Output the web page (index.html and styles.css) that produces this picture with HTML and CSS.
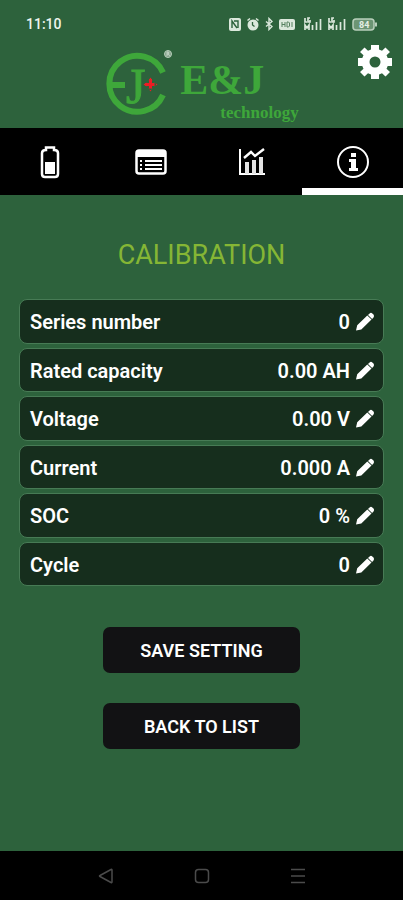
FILE: index.html
```
<!DOCTYPE html>
<html lang="en">
<head>
<meta charset="utf-8">
<meta name="viewport" content="width=device-width, initial-scale=1">
<title>Calibration</title>
<link rel="stylesheet" href="styles.css">
</head>
<body>
<svg class="defs" aria-hidden="true">
  <symbol id="pencil" viewBox="0 0 20 20"><path d="M1 18.500 2.200 13.300 12.300 3.500 16.500 7.500 6.300 17.500ZM13 2.900 14.600 1.400Q16 .300 17.300 1.400L18.500 2.600Q19.600 4 18.500 5.400L17.100 6.900Z"/></symbol>
</svg>
<div class="status">
  <time class="clock">11:10</time>
  <div class="indicators">
    <svg width="12" height="14" viewBox="0 0 12 14"><rect width="12" height="13" y="1" rx="2" fill="#dbe8dc"/><path d="M3 11V4l5 7M5 4h4v7" fill="none" stroke="#2d623c" stroke-width="1.400"/></svg>
    <svg width="12" height="14" viewBox="0 0 12 14"><circle cx="6" cy="8" r="4.500" fill="#dbe8dc" stroke="#dbe8dc" stroke-width="2"/><path d="M.5 3.500 3 1.500M11.500 3.500 9 1.500" fill="none" stroke="#dbe8dc" stroke-width="1.600"/><path d="M5.500 5v3l2 1.500" fill="none" stroke="#2d623c" stroke-width="1.300"/></svg>
    <svg width="8" height="14" viewBox="0 0 8 14"><path d="M1 4.500l6 5-3 3v-11l3 3-6 5" fill="none" stroke="#dbe8dc" stroke-width="1.400"/></svg>
    <svg class="wide" width="16" height="14" viewBox="0 0 16 14"><rect y="2" width="16" height="11" rx="2" fill="#dbe8dc"/><path d="M3 5v5M3 7.500h3M6 5v5M8 5v5h1.500l1-1V6l-1-1zM13 5v5" fill="none" stroke="#55805f"/></svg>
    <svg width="18" height="14" viewBox="0 0 18 14"><path d="M1 1v4h2M6 1H4v4h2V3M1 13V8l2 3 2-3v5M8.500 13V8M12.500 13V5M16.500 13V2" fill="none" stroke="#dbe8dc" stroke-width="1.700"/></svg>
    <svg width="18" height="14" viewBox="0 0 18 14"><path d="M1 1v4h2M6 1H4v4h2V3M1 13V8l2 3 2-3v5M8.500 13V8M12.500 13V5M16.500 13V2" fill="none" stroke="#dbe8dc" stroke-width="1.700"/></svg>
    <svg width="25" height="14" viewBox="0 0 25 14"><rect x="1" y="2" width="21" height="11" rx="3" fill="#6c9574" stroke="#b9cfbc" stroke-width="1.500"/><path d="M24 5.500v4" stroke="#b9cfbc" stroke-width="2"/><text class="charge" x="7" y="11">84</text></svg>
  </div>
</div>
<header class="header">
  <div class="logo">
    <svg class="emblem" width="70" height="70" viewBox="0 0 70 70" role="img" aria-label="EJ">
      <path d="M59 24.500A28 28 0 1 0 59 47M3 37h18" fill="none" stroke="#3ea73a" stroke-width="6"/>
      <text class="emblem-letter" x="22" y="55">J</text>
      <path d="M45 31h3v4h4v3h-4v4h-3v-4h-4v-3h4ZM46.500 29.500l2 3h-4ZM46.500 43.500l2-3h-4ZM39.500 36.500l3-2v4ZM53.500 36.500l-3-2v4Z" fill="#ed1c24"/>
      <circle cx="64" cy="6" r="3.500" fill="#7f9f85" stroke="#b9cfbc"/>
      <path d="M63 8V4h1.500q1 1 0 2H63m1.500 0 1 2" fill="none" stroke="#e4eee5" stroke-width=".7"/>
    </svg>
    <div class="wordmark"><span class="brand">E&amp;J</span><span class="tagline">technology</span></div>
  </div>
  <button class="gear" aria-label="Settings"><svg width="36" height="36" viewBox="0 0 36 36"><path fill="#fff" fill-rule="evenodd" d="M14 1h8v4.500l3 1.300L28.500 3.500 33 8l-3.500 3.200 1.200 2.800H35v8h-4.300l-1.200 2.800L33 28l-4.500 4.500-3.500-3.300-3 1.300V35h-8v-4.500l-3-1.300-3.500 3.300L3 28l3.500-3.200L5.300 22H1v-8h4.300l1.200-2.800L3 8l4.500-4.500L11 6.800l3-1.300ZM18 12.500a5.500 5.500 0 1 0 0 11a5.500 5.500 0 1 0 0-11Z"/></svg></button>
</header>
<nav class="tabs">
  <button class="tab" aria-label="Battery"><svg width="20" height="34" viewBox="0 0 20 34"><path d="M6 5V2.500h8V5q4 0 4 3v21q0 3-3 3H5q-3 0-3-3V8q0-3 4-3Z" fill="none" stroke="#fff" stroke-width="2.500"/><path d="M5 17h10v12H5z" fill="#fff"/></svg></button>
  <button class="tab" aria-label="Details"><svg width="32" height="26" viewBox="0 0 32 26"><rect x="1.500" y="1.500" width="29" height="23" rx="2.500" fill="none" stroke="#fff" stroke-width="2.500"/><path d="M2 2h28v6H2zM5 11h2v2H5zM10 11h17v2H10zM5 15h2v2H5zM10 15h17v2H10zM5 19h2v2H5zM10 19h17v2H10z" fill="#fff"/></svg></button>
  <button class="tab" aria-label="Chart"><svg width="28" height="28" viewBox="0 0 28 28"><path d="M2 1v25h25" fill="none" stroke="#fff" stroke-width="2"/><path d="M6 10l7-6 4 4 9-7" fill="none" stroke="#fff" stroke-width="2.400"/><path d="M7 14h4v12H7zM14 12h4v14h-4zM21 9h4v17h-4z" fill="#e4e4e4"/></svg></button>
  <button class="tab active" aria-label="Information" aria-current="page"><svg width="34" height="34" viewBox="0 0 34 34"><circle cx="17" cy="17" r="15" fill="none" stroke="#fff" stroke-width="2"/><path d="M15 8h5v4h-5zM13 14h7v9h2v3h-9v-3h2v-6h-2z" fill="#fff"/></svg></button>
</nav>
<main class="content">
  <h1 class="title">CALIBRATION</h1>
  <ul class="fields">
    <li class="field"><span>Series number</span><span class="value">0</span><button class="edit" aria-label="Edit series number"><svg><use href="#pencil"/></svg></button></li>
    <li class="field"><span>Rated capacity</span><span class="value">0.00 AH</span><button class="edit" aria-label="Edit rated capacity"><svg><use href="#pencil"/></svg></button></li>
    <li class="field"><span>Voltage</span><span class="value">0.00 V</span><button class="edit" aria-label="Edit voltage"><svg><use href="#pencil"/></svg></button></li>
    <li class="field"><span>Current</span><span class="value">0.000 A</span><button class="edit" aria-label="Edit current"><svg><use href="#pencil"/></svg></button></li>
    <li class="field"><span>SOC</span><span class="value">0 %</span><button class="edit" aria-label="Edit SOC"><svg><use href="#pencil"/></svg></button></li>
    <li class="field"><span>Cycle</span><span class="value">0</span><button class="edit" aria-label="Edit cycle"><svg><use href="#pencil"/></svg></button></li>
  </ul>
  <div class="actions">
    <button class="action">SAVE SETTING</button>
    <button class="action">BACK TO LIST</button>
  </div>
</main>
<nav class="system">
  <button aria-label="Back"><svg width="16" height="16" viewBox="0 0 16 16"><path d="M14 2v12q0 1-1 .5L2 8.500q-1-.5 0-1L13 1.500q1-.5 1 .5Z"/></svg></button>
  <button aria-label="Home"><svg width="16" height="16" viewBox="0 0 16 16"><rect x="1.500" y="1.500" width="13" height="13" rx="3"/></svg></button>
  <button aria-label="Recent apps"><svg width="16" height="16" viewBox="0 0 16 16"><path d="M1 1.500h14M1 8h14M1 14.500h14"/></svg></button>
</nav>
</body>
</html>
```
FILE: styles.css
```
* { box-sizing: border-box; }
body {
  margin: 0;
  min-height: 100vh;
  display: flex;
  flex-direction: column;
  background: #2d623c;
  color: #fff;
  font-family: Roboto, "Liberation Sans", sans-serif;
}
button {
  margin: 0;
  padding: 0;
  border: 0;
  background: none;
  color: inherit;
  font: inherit;
  cursor: pointer;
}
svg { display: block; }
.defs { position: absolute; width: 0; height: 0; }

.status {
  height: 44px;
  padding: 4px 26px 0;
  display: flex;
  align-items: center;
  justify-content: space-between;
}
.clock { font-size: 14px; font-weight: 500; color: #eef5ee; }
.indicators { display: flex; align-items: center; gap: 6px; }
.wide { margin-right: 3px; }
.charge { font-size: 9px; font-weight: 700; fill: #e4eee5; }

.header {
  height: 84px;
  padding: 0 10px;
  display: grid;
  grid-template-columns: 1fr auto 1fr;
  align-items: start;
}
.logo {
  grid-column: 2;
  padding-top: 4px;
  display: flex;
  gap: 6px;
  font-family: "Liberation Serif", serif;
  font-weight: 700;
  color: #3ea73a;
}
.emblem-letter { font-size: 50px; font-weight: 400; fill: #3ea73a; stroke: #3ea73a; }
.wordmark { display: flex; flex-direction: column; padding-top: 8px; }
.brand { font-size: 42px; line-height: 48px; }
.tagline { align-self: flex-end; padding-left: 40px; font-size: 17px; line-height: 18px; }
.gear { grid-column: 3; justify-self: end; }

.tabs { display: grid; grid-template-columns: repeat(4, 1fr); background: #000; }
.tab {
  height: 67px;
  display: flex;
  align-items: center;
  justify-content: center;
  border-top: 7px solid transparent;
  border-bottom: 7px solid transparent;
}
.active { border-bottom-color: #fff; }

.content { flex: 1; padding: 44px 19px 40px; }
.title {
  margin: 0 0 28px;
  font-size: 27px;
  line-height: 32px;
  font-weight: 400;
  text-align: center;
  color: #85b635;
}
.fields {
  min-height: 287px;
  margin: 0;
  padding: 0;
  list-style: none;
  display: grid;
  grid-auto-rows: 1fr;
  gap: 4px;
}
.field {
  padding: 2px 8px 0 10px;
  display: flex;
  align-items: center;
  gap: 5px;
  border: 1px solid #477b55;
  border-radius: 8px;
  background: #162e1d;
  font-size: 20px;
  font-weight: 600;
}
.value { margin-left: auto; }
.edit svg { width: 20px; height: 20px; fill: #fff; }
.actions { margin-top: 41px; display: flex; flex-direction: column; align-items: center; gap: 30px; }
.action {
  width: 54%;
  height: 46px;
  border-radius: 7px;
  background: #121214;
  font-size: 18px;
  font-weight: 600;
}

.system {
  height: 49px;
  display: flex;
  align-items: center;
  justify-content: center;
  gap: 80px;
  background: #000;
}
.system svg { fill: none; stroke: #4b4b4b; stroke-width: 1.500; }
```
